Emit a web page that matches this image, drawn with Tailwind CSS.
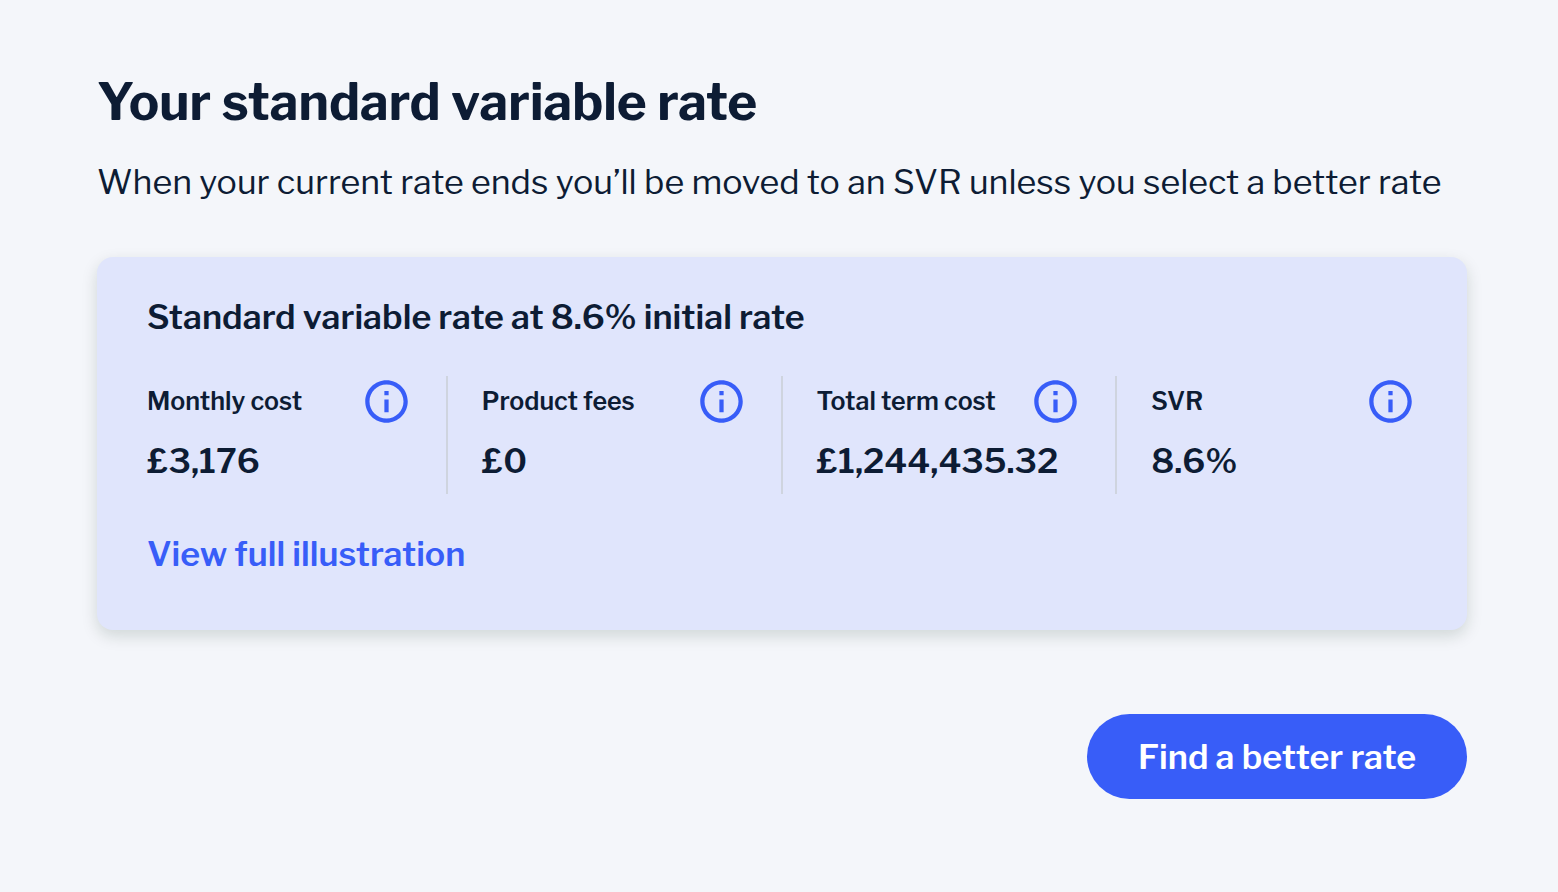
<!DOCTYPE html>
<html lang="en">
<head>
<meta charset="utf-8">
<meta name="viewport" content="width=device-width, initial-scale=1">
<title>Your standard variable rate</title>
<script src="https://cdn.jsdelivr.net/npm/@tailwindcss/browser@4"></script>
</head>
<body class="min-h-screen bg-[#f4f6fa] font-['Libre_Franklin','Open_Sans',sans-serif] text-[#0d1c34]">
<svg class="hidden" aria-hidden="true">
  <symbol id="info" viewBox="0 0 24 24">
    <path fill="currentColor" d="M11 7h2v2h-2zm0 4h2v6h-2zm1-9C6.480 2 2 6.480 2 12s4.480 10 10 10 10-4.480 10-10S17.520 2 12 2zm0 18c-4.410 0-8-3.590-8-8s3.590-8 8-8 8 3.590 8 8-3.590 8-8 8z"/>
  </symbol>
</svg>
<main class="flex flex-col pt-[72px] pr-[91px] pb-20 pl-[97px]">
  <h1 class="text-[51px] leading-[60px] font-bold">Your standard variable rate</h1>
  <p class="mt-6 text-[34px] leading-[52px]">When your current rate ends you’ll be moved to an SVR unless you select a better rate</p>
  <section class="mt-[49px] rounded-2xl bg-[#e0e5fc] pt-[34px] pr-[51px] pb-[50px] pl-[50px] shadow-[0_6px_16px_rgba(0,40,20,0.15)]">
    <h2 class="text-[34px] leading-[52px] font-semibold">Standard variable rate at 8.6% initial rate</h2>
    <div class="mt-[33px] flex gap-[34px]">
      <div class="flex-1 pb-2">
        <div class="flex h-[50px] items-center justify-between">
          <h3 class="text-[25px] leading-[34px] font-semibold whitespace-nowrap">Monthly cost</h3>
          <button type="button" aria-label="About monthly cost" class="cursor-pointer text-[#385df8]"><svg class="size-[51px]"><use href="#info"/></svg></button>
        </div>
        <p class="mt-[9px] text-[34px] leading-[51px] font-semibold">£3,176</p>
      </div>
      <div class="w-[2px] bg-[#cfd4df]"></div>
      <div class="flex-1 pb-2">
        <div class="flex h-[50px] items-center justify-between">
          <h3 class="text-[25px] leading-[34px] font-semibold whitespace-nowrap">Product fees</h3>
          <button type="button" aria-label="About product fees" class="cursor-pointer text-[#385df8]"><svg class="size-[51px]"><use href="#info"/></svg></button>
        </div>
        <p class="mt-[9px] text-[34px] leading-[51px] font-semibold">£0</p>
      </div>
      <div class="w-[2px] bg-[#cfd4df]"></div>
      <div class="flex-1 pb-2">
        <div class="flex h-[50px] items-center justify-between">
          <h3 class="text-[25px] leading-[34px] font-semibold whitespace-nowrap">Total term cost</h3>
          <button type="button" aria-label="About total term cost" class="cursor-pointer text-[#385df8]"><svg class="size-[51px]"><use href="#info"/></svg></button>
        </div>
        <p class="mt-[9px] text-[34px] leading-[51px] font-semibold">£1,244,435.32</p>
      </div>
      <div class="w-[2px] bg-[#cfd4df]"></div>
      <div class="flex-1 pb-2">
        <div class="flex h-[50px] items-center justify-between">
          <h3 class="text-[25px] leading-[34px] font-semibold whitespace-nowrap">SVR</h3>
          <button type="button" aria-label="About SVR" class="cursor-pointer text-[#385df8]"><svg class="size-[51px]"><use href="#info"/></svg></button>
        </div>
        <p class="mt-[9px] text-[34px] leading-[51px] font-semibold">8.6%</p>
      </div>
    </div>
    <a href="#" class="mt-[34px] block w-fit text-[34px] leading-[52px] font-semibold text-[#385df8]">View full illustration</a>
  </section>
  <button type="button" class="mt-[84px] cursor-pointer self-end rounded-full bg-[#385df8] px-[51px] pt-[17px] pb-4 text-[34px] leading-[52px] font-semibold text-white">Find a better rate</button>
</main>
</body>
</html>
